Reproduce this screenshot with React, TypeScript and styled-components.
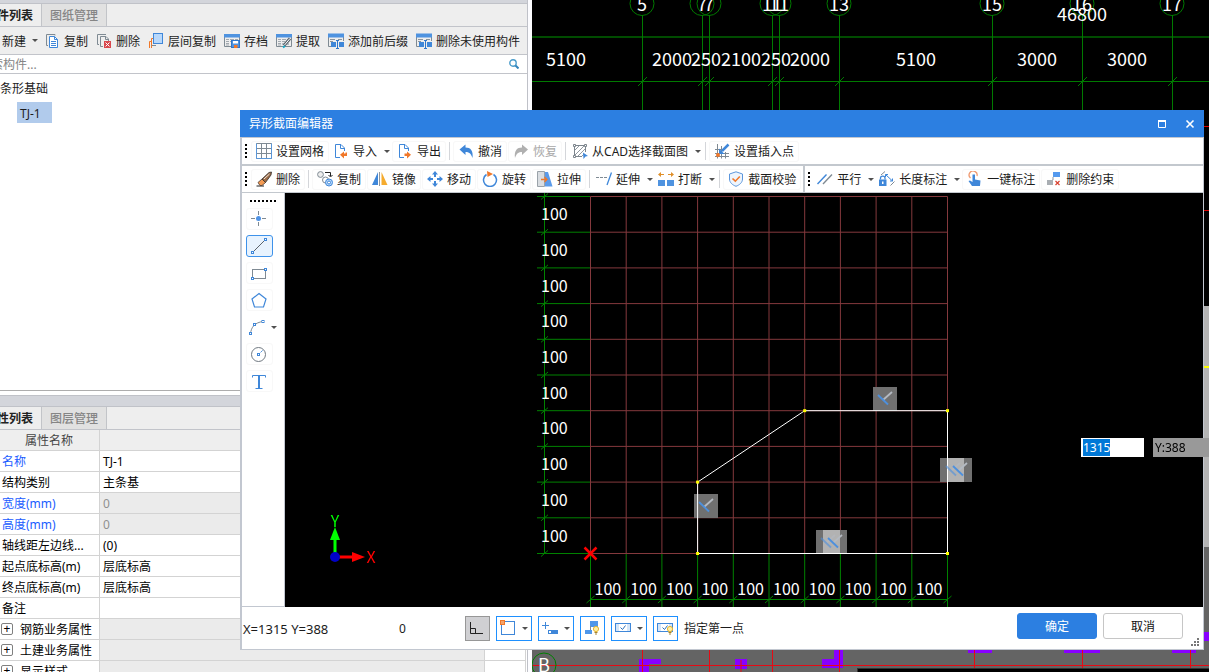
import React, { useEffect, useRef } from 'react';
import styled, { createGlobalStyle, css } from 'styled-components';

const uiFont = '"Noto Sans", "Noto Sans CJK SC", sans-serif';
const cadFont = '"Noto Sans CJK SC", sans-serif';
const blue = '#3f87d9';
const grey = '#7f8a93';
const orange = '#f0782a';

const GlobalStyle = createGlobalStyle`
  * { box-sizing: border-box; }
  body { margin: 0; background: #fcfcff; overflow: hidden; }
  button, input, table { font: inherit; color: inherit; }
`;

const Screen = styled.div`
  position: relative;
  display: flex;
  height: 100vh;
  overflow: hidden;
  font: 12px/18px ${uiFont};
  color: #1c1c1c;
`;

/* ---------- left dock ---------- */

const Dock = styled.aside`
  flex: 0 0 552px;
  margin-left: -24px;
  display: flex;
  flex-direction: column;
  border-right: 1px solid #bfc1c8;
  background: #fff;
  overflow: hidden;
`;

const DockBar = styled.div<{ $h: number }>`
  flex: 0 0 ${p => p.$h}px;
  background: #d3d5db;
  border-bottom: 1px solid #c0c2c8;
`;

const Tabs = styled.div`
  flex: 0 0 23px;
  display: flex;
  padding-left: 1px;
  background: #eeeeee;
  border-bottom: 1px solid #c2c4ca;
`;

const Tab = styled.button<{ $active?: boolean }>`
  width: 65px;
  padding: 2px 8px 0;
  border: 0;
  border-right: 1px solid #c2c4c8;
  background: ${p => (p.$active ? '#eeeeee' : '#e1e1e1')};
  color: ${p => (p.$active ? '#222' : '#858585')};
  font-weight: ${p => (p.$active ? 600 : 500)};
  white-space: nowrap;
`;

const DockTools = styled.div`
  flex: 0 0 28px;
  display: flex;
  align-items: center;
  gap: 8px;
  padding-left: 26px;
  background: #eeeeee;
  border-bottom: 1px solid #c2c4ca;
`;

const DockButton = styled.button`
  display: flex;
  align-items: center;
  gap: 4px;
  padding: 0;
  border: 0;
  background: none;
  white-space: nowrap;
`;

const NewButton = styled(DockButton)`
  gap: 6px;
  margin-right: -2px;
`;

const Caption = styled.span`
  padding-top: 2px;
`;

const SearchRow = styled.label`
  flex: 0 0 19px;
  display: flex;
  align-items: center;
  padding: 0 8px 0 3px;
  border-bottom: 1px solid #c2c4ca;
`;

const SearchInput = styled.input`
  flex: 1;
  min-width: 0;
  height: 18px;
  padding: 2px 0 0;
  border: 0;
  outline: 0;
  background: none;
  &::placeholder { color: #858585; }
`;

const Tree = styled.ul`
  flex: 0 0 317px;
  margin: 0;
  padding: 5px 0 0 24px;
  list-style: none;
  border-bottom: 1px solid #adadad;
  line-height: 20px;
`;

const TreeLeaf = styled.li`
  width: 35px;
  margin: 3px 0 0 17px;
  padding: 2px 0 0 3px;
  line-height: 19px;
  background: #b1cbec;
`;

const PropertyPanel = styled.section`
  flex: 1;
  margin-top: 4px;
  border-top: 1px solid #c0c2c8;
  display: flex;
  flex-direction: column;
  overflow: hidden;
`;

const PropertyTable = styled.table`
  width: 550px;
  table-layout: fixed;
  border-collapse: separate;
  border-spacing: 0;
  color: #000;
`;

const cell = css`
  height: 21px;
  padding: 2px 3px 0;
  border-right: 1px solid #d3d3d3;
  border-bottom: 1px solid #d3d3d3;
  font-weight: 400;
  line-height: 18px;
  text-align: left;
  white-space: nowrap;
`;

const Head = styled.th`
  ${cell}
  padding-left: 26px;
  background: #eeeeee;
  color: #444;
  text-align: center;
`;

const Name = styled.th<{ $link?: boolean }>`
  ${cell}
  padding-left: 26px;
  color: ${p => (p.$link ? '#1a5cff' : '#000')};
`;

const Value = styled.td<{ $off?: boolean }>`
  ${cell}
  background: ${p => (p.$off ? '#ebebeb' : '#fff')};
  color: ${p => (p.$off ? '#909090' : '#000')};
`;

const Expander = styled.button`
  width: 12px;
  height: 12px;
  margin: 0 7px 0 -1px;
  padding: 0;
  border: 1px solid #808080;
  border-radius: 2px;
  background: #fff;
  font-size: 12px;
  line-height: 9px;
  vertical-align: 1px;
`;

/* ---------- CAD view behind the dialog ---------- */

const CadView = styled.main`
  flex: 1;
  min-width: 0;
  margin-left: 4px;
  background: #000;
  overflow: hidden;
`;

const Drawing = styled.svg`
  display: block;
  font-family: ${cadFont};
`;

/* ---------- dialog ---------- */

const Dialog = styled.section`
  position: absolute;
  left: 240px;
  right: 5px;
  top: 110px;
  bottom: 22px;
  display: flex;
  flex-direction: column;
  background: #fff;
`;

const TitleBar = styled.header`
  flex: 0 0 27px;
  display: flex;
  align-items: center;
  gap: 14px;
  padding: 0 7px 0 9px;
  background: #2c7fe1;
  color: #fff;
`;

const Title = styled.h1`
  flex: 1;
  margin: 0;
  font-size: 12px;
  font-weight: 400;
`;

const WindowButton = styled.button`
  display: flex;
  padding: 2px;
  border: 0;
  background: none;
`;

const DialogBody = styled.div`
  flex: 1;
  min-height: 0;
  display: flex;
  flex-direction: column;
  border: 1px solid #c2c7d0;
  border-left-width: 2px;
`;

const ToolRow = styled.div<{ $line: number }>`
  flex: 0 0 ${p => 26 + p.$line}px;
  display: flex;
  border-bottom: ${p => p.$line}px solid #c3c8ce;
`;

const ToolGroup = styled.div<{ $divided?: boolean }>`
  display: flex;
  align-items: center;
  gap: 1px;
  padding: 0 2px 0 3px;
  border-right: ${p => (p.$divided ? '2px solid #c3c8ce' : '0')};
`;

const Grip = styled.span`
  width: 2px;
  height: 14px;
  margin-right: 3px;
  background: repeating-linear-gradient(#000 0 2px, transparent 2px 4px);
`;

const ToolButton = styled.button<{ $menu?: boolean }>`
  display: flex;
  align-items: center;
  height: 21px;
  padding: ${p => (p.$menu ? '0 2px 0 3px' : '0 5px')};
  border: 0;
  border-radius: 3px;
  box-shadow: ${p => (p.$menu ? 'none' : 'inset 0 0 0 1px #f8f8f8')};
  background: none;
  white-space: nowrap;
  &:disabled { color: #a8a8a8; }
`;

const ToolText = styled(Caption)`
  margin-left: 4px;
`;

const Divider = styled.span`
  width: 1px;
  height: 18px;
  margin: 0 2px;
  background: #d4d6da;
`;

const Arrow = styled.span<{ $gap?: number }>`
  width: 0;
  height: 0;
  margin-left: ${p => p.$gap ?? 0}px;
  border: 3px solid transparent;
  border-top-color: #505050;
  border-bottom-width: 0;
`;

const ToolArrow = styled(Arrow)`
  margin-right: -1px;
`;

const WorkArea = styled.div`
  flex: 1;
  min-height: 0;
  display: flex;
`;

const Palette = styled.nav`
  flex: 0 0 43px;
  display: flex;
  flex-direction: column;
  gap: 5px;
  padding: 7px 0 0 4px;
  border-right: 1px solid #c2c7d0;
  border-bottom: 1px solid #c2c7d0;
`;

const PaletteGrip = styled.span`
  width: 26px;
  height: 2px;
  margin: 0 0 1px 4px;
  background: repeating-linear-gradient(90deg, #000 0 2px, transparent 2px 4px);
`;

const PaletteItem = styled.div`
  display: flex;
  align-items: center;
`;

const PaletteButton = styled.button<{ $on?: boolean; $menu?: boolean }>`
  display: flex;
  align-items: center;
  width: ${p => (p.$menu ? 25 : 27)}px;
  height: 22px;
  padding: 0 0 0 ${p => (p.$menu ? 2 : 4)}px;
  border: 1px solid ${p => (p.$on ? '#3e92ea' : p.$menu ? 'transparent' : '#f8f8f8')};
  border-radius: 3px;
  background: ${p => (p.$on ? '#e8f3fe' : '#fff')};
`;

const SectionView = styled.div`
  flex: 1;
  min-width: 0;
  background: #000;
  overflow: hidden;
`;

const StatusBar = styled.footer`
  flex: 0 0 42px;
  display: flex;
  align-items: center;
  gap: 6px;
  padding: 0 4px 0 1px;
`;

const Coords = styled(Caption)`
  width: 150px;
  font-size: 13px;
`;

const Snap = styled(Caption)`
  width: 60px;
`;

const StatusButton = styled.button<{ $on?: boolean; $wide?: boolean }>`
  display: flex;
  align-items: center;
  justify-content: space-between;
  width: ${p => (p.$wide ? 36 : 25)}px;
  height: 25px;
  padding: 0 3px;
  border: 1px solid ${p => (p.$on ? '#979797' : '#1e90ff')};
  background: ${p => (p.$on ? '#d0d0d3' : '#fff')};
`;

const Prompt = styled(Caption)`
  flex: 1;
`;

const ActionButton = styled.button<{ $primary?: boolean }>`
  width: 80px;
  height: 26px;
  margin-bottom: 4px;
  padding: 2px 0 0;
  border: 1px solid ${p => (p.$primary ? '#2c7fe1' : '#c6c6c6')};
  border-radius: 3px;
  background: ${p => (p.$primary ? '#2c7fe1' : '#fff')};
  color: ${p => (p.$primary ? '#fff' : '#111')};
`;

const ResizeGrip = styled.svg`
  align-self: flex-end;
  margin: 0 0 3px 2px;
`;

/* ---------- floating coordinate entry ---------- */

const Entry = styled.div`
  position: absolute;
  top: 438px;
  right: 0;
  display: flex;
  gap: 9px;
`;

const XInput = styled.input`
  width: 63px;
  height: 19px;
  padding: 0 2px;
  border: 0;
  outline: 0;
  background: #fff;
  &::selection { background: #0078d7; color: #fff; }
`;

const YInput = styled.input`
  width: 56px;
  height: 19px;
  padding: 0 2px;
  border: 0;
  outline: 0;
  background: #999;
  color: #000;
`;

/* ---------- icons ---------- */

const Icon = ({ children }: { children: React.ReactNode }) => (
  <svg width="16" height="16" viewBox="0 0 16 16" fill="none" aria-hidden="true">
    {children}
  </svg>
);

const CopyDoc = () => (
  <Icon>
    <path d="M11 2.5V1.500H2.500V12.500H4" stroke={grey} />
    <path d="M5.500 3.500H10.500L13.500 6.500V14.500H5.500Z" stroke={blue} fill="#fff" />
    <path d="M10.500 3.500V6.500H13.500M7 8.500H12M7 10.500H12M7 12.500H12" stroke={blue} />
  </Icon>
);
const DeleteDoc = () => (
  <Icon>
    <path d="M10 1.500H1.500V11.500H3" stroke={grey} />
    <path d="M7 13.500H4.500V3.500H10L12.500 6V8M9.500 4V6.500H12" stroke={grey} />
    <rect x="8" y="8" width="7" height="7" fill="#d9474d" />
    <path d="M9.500 9.500L13.500 13.500M13.500 9.500L9.500 13.500" stroke="#fff" />
  </Icon>
);
const LayerCopy = () => (
  <Icon>
    <path d="M1.500 15V8.500H3M3.500 15V5.500H5" stroke={orange} />
    <path d="M3.500 12.500H8" stroke={grey} />
    <rect x="5.500" y=".5" width="9" height="10" fill="#b8d8fb" stroke={blue} />
  </Icon>
);
const Sheet = () => (
  <>
    <path d="M.5 4V13.500H7M15.500 4V7" stroke={grey} />
    <path d="M0 1H16V4.500H0Z" fill="#4f93e0" />
    <path d="M2 6.500H5M6 6.500H10M11 6.500H14M2 8.500H5M6 8.500H9M2 10.500H5M2 12H5" stroke="#a2a9b0" />
  </>
);
const SaveSheet = () => (
  <Icon>
    <Sheet />
    <rect x="7.500" y="7.500" width="8" height="7" fill="#4f93e0" stroke="#2f77cb" />
    <rect x="9" y="8" width="5" height="2.500" fill="#fff" />
    <rect x="10" y="12" width="3.500" height="3" fill={orange} />
  </Icon>
);
const ExtractSheet = () => (
  <Icon>
    <Sheet />
    <path d="M6 11H13M15.500 7V13.500H7" stroke={grey} />
    <path d="M8 12.500L14 5.500" stroke="#5c646c" strokeWidth="3" />
    <path d="M8.500 12L14 5.500" stroke="#fff" />
    <path d="M7 14.500L9 13" stroke="#16a7c6" strokeWidth="2" />
  </Icon>
);
const AffixSheet = () => (
  <Icon>
    <path d="M.5 4V13.500H3M15.500 4V8" stroke={grey} />
    <path d="M0 .5H16V4.500H0Z" fill="#4f93e0" />
    <path d="M2 6.500H7M10 6.500H14M2 8.500H5" stroke="#8b949c" />
    <path d="M3 9H8V14H3ZM11 9H16V14H11Z" fill={blue} />
    <path d="M8 7.500H11M9.500 7.500V15.500M8 15.500H11" stroke="#2f77cb" />
  </Icon>
);
const GridIcon = () => (
  <Icon>
    <path d="M.5 .5H15.500V15.500H.5ZM.5 5.500H15.500M.5 10.500H15.500M5.500 .5V15.500M10.500 .5V15.500" stroke={grey} />
    <path d="M.5 .5V15.500M.5 15.500H15.500M15.500 .5V15.500" stroke="#5a96d8" />
  </Icon>
);
const ImportIcon = () => (
  <Icon>
    <path d="M7 14.500H2.500V1.500H8L11.500 5V8M7.500 2V5.500H11" stroke={blue} />
    <path d="M14 9.500V13H11V15.500L7 11.800L11 8.500V10.500H12.500V9.500Z" fill={orange} />
  </Icon>
);
const ExportIcon = () => (
  <Icon>
    <path d="M7 14.500H2.500V1.500H8L11.500 5V8M7.500 2V5.500H11" stroke={blue} />
    <path d="M7.500 10.500H10V8.500L14 11.800L10 15.500V13H7.500Z" fill={orange} />
  </Icon>
);
const UndoIcon = () => (
  <Icon>
    <path d="M1.500 6.500L7.500 1.500V4.500C12.500 4.500 15.500 7.500 14.500 15C13 10.500 11 9 7.500 9V12Z" fill={blue} />
  </Icon>
);
const RedoIcon = () => (
  <Icon>
    <path d="M15 6.500L9 1.500V4.500C4 4.500 1 7.500 2 15C3.500 10.500 5.500 9 9 9V12Z" fill="#b0b0b0" />
  </Icon>
);
const HatchIcon = () => (
  <Icon>
    <path d="M2.500 2.500H13.500V9M2.500 2.500V13.500H10" stroke="#7c858d" />
    <path d="M3 7L7 3M3 12L12 3M6 13L13 6M10 13L12 11" stroke="#8f979f" />
    <path d="M1.500 1.500H3.500V3.500H1.500ZM12.500 1.500H14.500V3.500H12.500ZM1.500 12.500H3.500V14.500H1.500Z" fill="#fff" stroke="#7c858d" />
    <path d="M11 9.500L16 13L13.500 13.500L11.500 16Z" fill={blue} />
  </Icon>
);
const InsertPoint = () => (
  <Icon>
    <path d="M3.500 1V15.500M7.500 3V15.500M1 6.500H9M1 10.500H15M1 13.500H15M11.500 9V15.500" stroke={grey} />
    <path d="M14.500 1.500L8 8" stroke={blue} strokeWidth="2.500" />
    <path d="M5 11V5.500L10.500 11Z" fill={blue} />
    <circle cx="4" cy="12" r="2" fill={orange} />
  </Icon>
);
const EraserIcon = () => (
  <Icon>
    <path d="M.5 15H8" stroke="#222" />
    <path d="M2 11.500L6 8L9.500 11.500L6 14.500H4Z" fill="#f39a52" stroke="#4a3a30" strokeWidth=".8" />
    <path d="M6 8L13 1.500L15.500 1L15 4L9.500 11.500Z" fill="#9a6a45" stroke="#33302e" strokeWidth=".8" />
    <path d="M8 8L13.500 3" stroke="#f4e9dd" />
  </Icon>
);
const CopyShape = () => (
  <Icon>
    <circle cx="3.500" cy="3.500" r="2.900" stroke={grey} fill="#eee" />
    <path d="M8 1.500H13.500V5M11.500 4L13.500 6L15.500 4" stroke="#222" />
    <circle cx="8.500" cy="9" r="3" stroke={grey} fill="#fff" />
    <circle cx="12" cy="11.500" r="3.500" fill="#b8d8fb" stroke={blue} />
    <circle cx="12" cy="11.500" r="1.500" fill="#fff" stroke={blue} />
  </Icon>
);
const MirrorIcon = () => (
  <Icon>
    <path d="M6 1V14H0Z" fill={blue} />
    <path d="M7.500 1V15" stroke="#8f979f" />
    <path d="M9.500 1V14H15.500Z" fill="#f5ab2e" />
  </Icon>
);
const MoveIcon = () => (
  <Icon>
    <path d="M8 0L11 3.500H5ZM8 16L11 12.500H5ZM0 8L3.500 5V11ZM16 8L12.500 5V11Z" fill={blue} />
    <path d="M8 3V6M8 10V13M3 8H6M10 8H13" stroke={blue} strokeWidth="2" />
  </Icon>
);
const RotateIcon = () => (
  <Icon>
    <path d="M4.500 3.500A6.500 6.500 0 1 0 11.500 3.500" stroke={blue} strokeWidth="1.500" />
    <path d="M5 0L11 3L5.500 6Z" fill={orange} />
  </Icon>
);
const StretchIcon = () => (
  <Icon>
    <path d="M.5 .5H7.500V15.500H.5Z" fill="#d9dde1" stroke="#9aa2a9" />
    <path d="M8 1H11L15.500 15.500H8Z" fill="#5b9bea" />
    <path d="M4 8.500H10M7.500 6L10 8.500L7.500 11" stroke={orange} strokeWidth="1.300" />
  </Icon>
);
const ExtendIcon = () => (
  <Icon>
    <path d="M0 6.500H3M4 6.500H7M8 6.500H11" stroke={grey} />
    <path d="M15.500 1.500L11 14" stroke={blue} strokeWidth="1.300" />
  </Icon>
);
const BreakIcon = () => (
  <Icon>
    <path d="M0 9H7V15H0ZM9 9H16V15H9Z" fill="#4f93e0" />
    <path d="M2 3.500H6M10 3.500H14" stroke="#e0902a" />
    <path d="M0 3.500L3 1V6ZM16 3.500L13 1V6Z" fill="#e0902a" />
  </Icon>
);
const ShieldIcon = () => (
  <Icon>
    <path d="M8 .8L14.500 3V8C14.500 11.500 11.500 14 8 15.300C4.500 14 1.500 11.500 1.500 8V3Z" stroke="#5b96dc" fill="#eef5fd" />
    <path d="M4.500 7.500L7.300 10.200L11.800 5.500" stroke={orange} strokeWidth="1.600" />
  </Icon>
);
const ParallelIcon = () => (
  <Icon>
    <path d="M.5 13L9.500 3.500" stroke={blue} strokeWidth="1.400" />
    <path d="M6 13L15 3.500" stroke={grey} strokeWidth="1.400" />
  </Icon>
);
const LengthLock = () => (
  <Icon>
    <path d="M1.500 8.500V7C1.500 4.500 6 4.500 6 7V8.500" stroke={blue} strokeWidth="1.300" />
    <rect x="0" y="8.500" width="7.500" height="6.500" fill={blue} />
    <rect x="3" y="10.500" width="1.500" height="2.500" fill="#fff" />
    <path d="M2 4L6 .5M11.500 14.500L15.500 10.500" stroke={grey} />
    <path d="M6.500 3.500L13.500 10M6.500 6V3.500H9M13.500 7.500V10H11" stroke={blue} />
  </Icon>
);
const TouchIcon = () => (
  <Icon>
    <path d="M3.500 7A4 4 0 1 1 10 5" stroke="#f09b72" strokeWidth="1.300" />
    <path d="M5.500 3.500H8V8.500L13.500 9.500L13 15H5L1.500 10L3 9.500L5.500 11Z" fill={blue} />
  </Icon>
);
const DeleteConstraint = () => (
  <Icon>
    <rect x="7" y="1" width="7" height="5" fill="#559aee" />
    <path d="M7 6V9H6.500" stroke="#8f979f" />
    <rect x="1" y="9" width="6" height="5" fill="#a9aeb3" />
    <path d="M9.500 10L13.500 14M13.500 10L9.500 14" stroke="#d8412f" strokeWidth="1.200" />
  </Icon>
);
const Node = ({ x, y }: { x: number; y: number }) => (
  <rect x={x} y={y} width="2" height="2" fill="#fff" stroke={blue} />
);
const PointTool = () => (
  <Icon>
    <path d="M7.500 0V4M7.500 11V15M0 7.500H4M11 7.500H15" stroke={grey} />
    <circle cx="7.500" cy="7.500" r="2.500" fill="#4f93e6" />
  </Icon>
);
const LineTool = () => (
  <Icon>
    <path d="M2 14L14 2" stroke="#5b636b" />
    <Node x={.5} y={13.500} /><Node x={13.500} y={.5} />
  </Icon>
);
const RectTool = () => (
  <Icon>
    <rect x="1.500" y="4.500" width="13" height="9" stroke={grey} />
    <Node x={.5} y={12.500} /><Node x={13.500} y={3.500} />
  </Icon>
);
const PolygonTool = () => (
  <Icon><path d="M8 1.500L15 7L12.500 15H3.500L1 7Z" stroke={blue} strokeWidth="1.200" /></Icon>
);
const ArcTool = () => (
  <Icon>
    <path d="M1.500 15C2 8 6 3.500 14 2.500" stroke={grey} />
    <Node x={.5} y={13.500} /><Node x={4.500} y={4.500} /><Node x={13} y={1.500} />
  </Icon>
);
const CircleTool = () => (
  <Icon>
    <circle cx="7.500" cy="8.500" r="7" stroke="#707981" />
    <path d="M8 8L12 4" stroke={blue} strokeDasharray="2 1" />
    <Node x={6.500} y={7.500} />
  </Icon>
);
const TextTool = () => (
  <Icon>
    <path d="M1.500 4.500V2.500H14.500V4.500M4.500 15.500H11.500" stroke={blue} />
    <path d="M8 2.500V15.500" stroke={blue} strokeWidth="2" />
  </Icon>
);
const StatusIcon = ({ children }: { children: React.ReactNode }) => (
  <svg width="17" height="17" viewBox="0 0 17 17" fill="none" aria-hidden="true">
    {children}
  </svg>
);
const OrthoIcon = () => (
  <StatusIcon>
    <path d="M1.500 2V13.500H14M1.500 8.500H6.500V13.500" stroke="#222" />
  </StatusIcon>
);
const CornerSnap = () => (
  <StatusIcon>
    <rect x="1.500" y="1.500" width="13" height="13" stroke={blue} />
    <rect x=".5" y=".5" width="4" height="4" fill="#f5a46a" stroke={orange} />
  </StatusIcon>
);
const DynamicInput = () => (
  <StatusIcon>
    <path d="M3.500 2V9M0 5.500H7" stroke={blue} />
    <rect x="6" y="10" width="10" height="4" fill={blue} /><rect x="7" y="11" width="2" height="2" fill="#fff" />
  </StatusIcon>
);
const Bulb = ({ x, y }: { x: number; y: number }) => (
  <g transform={`translate(${x} ${y})`}>
    <circle cx="3" cy="3" r="2.600" fill="#fff0a8" stroke="#e5b52e" />
    <path d="M1.500 6.500H4.500M2 8H4" stroke="#a58330" />
  </g>
);
const ConstraintLamp = () => (
  <StatusIcon>
    <path d="M6 1H14V7H6ZM1 10H8V14H1Z" fill="#4f97ea" />
    <path d="M6.500 6V10" stroke={grey} />
    <Bulb x={9} y={6} />
  </StatusIcon>
);
const CheckBoxIcon = ({ lamp }: { lamp?: boolean }) => (
  <StatusIcon>
    <rect x=".5" y="3.500" width="15" height="8" fill="#d5e6f8" stroke={blue} />
    <rect x="4" y="4" width="8" height="7" fill="#fff" />
    <path d="M5.500 7.500L7.500 9.500L10.500 5.500" stroke="#2c6fb8" />
    {lamp && <Bulb x={10} y={6} />}
  </StatusIcon>
);

/* ---------- data ---------- */

const dockTools: [string, React.FC][] = [
  ['复制', CopyDoc], ['删除', DeleteDoc], ['层间复制', LayerCopy], ['存档', SaveSheet],
  ['提取', ExtractSheet], ['添加前后缀', AffixSheet], ['删除未使用构件', AffixSheet],
];

type Tool = { text: string; icon: React.FC; menu?: boolean; off?: boolean } | 'divider';

const fileTools: Tool[] = [
  { text: '设置网格', icon: GridIcon },
  { text: '导入', icon: ImportIcon, menu: true },
  { text: '导出', icon: ExportIcon },
  'divider',
  { text: '撤消', icon: UndoIcon },
  { text: '恢复', icon: RedoIcon, off: true },
  'divider',
  { text: '从CAD选择截面图', icon: HatchIcon, menu: true },
  'divider',
  { text: '设置插入点', icon: InsertPoint },
];

const editTools: Tool[] = [
  { text: '删除', icon: EraserIcon },
  'divider',
  { text: '复制', icon: CopyShape },
  { text: '镜像', icon: MirrorIcon },
  { text: '移动', icon: MoveIcon },
  { text: '旋转', icon: RotateIcon },
  { text: '拉伸', icon: StretchIcon },
  'divider',
  { text: '延伸', icon: ExtendIcon, menu: true },
  { text: '打断', icon: BreakIcon, menu: true },
  'divider',
  { text: '截面校验', icon: ShieldIcon },
];

const constraintTools: Tool[] = [
  { text: '平行', icon: ParallelIcon, menu: true },
  { text: '长度标注', icon: LengthLock, menu: true },
  { text: '一键标注', icon: TouchIcon },
  { text: '删除约束', icon: DeleteConstraint },
];

const drawTools: { name: string; icon: React.FC; on?: boolean; menu?: boolean }[] = [
  { name: '点', icon: PointTool },
  { name: '直线', icon: LineTool, on: true },
  { name: '矩形', icon: RectTool },
  { name: '多边形', icon: PolygonTool },
  { name: '圆弧', icon: ArcTool, menu: true },
  { name: '圆', icon: CircleTool },
  { name: '文字', icon: TextTool },
];

const properties: { name: string; value?: string; link?: boolean; off?: boolean; group?: boolean }[] = [
  { name: '名称', value: 'TJ-1', link: true },
  { name: '结构类别', value: '主条基' },
  { name: '宽度(mm)', value: '0', link: true, off: true },
  { name: '高度(mm)', value: '0', link: true, off: true },
  { name: '轴线距左边线...', value: '(0)' },
  { name: '起点底标高(m)', value: '层底标高' },
  { name: '终点底标高(m)', value: '层底标高' },
  { name: '备注' },
  { name: '钢筋业务属性', group: true, off: true },
  { name: '土建业务属性', group: true, off: true },
  { name: '显示样式', group: true, off: true },
];

const axes: [string, number][] = [
  ['5', 642], ['7', 702], ['7', 709], ['11', 772], ['11', 779], ['13', 839], ['15', 992], ['16', 1082], ['17', 1172],
];

const spans: [string, number][] = [
  ['5100', 566], ['2000', 672], ['250', 706], ['2100', 741], ['250', 776], ['2000', 810],
  ['5100', 916], ['3000', 1037], ['3000', 1127],
];

/* ---------- parts ---------- */

const Tools = ({ items }: { items: Tool[] }) => (
  <>
    <Grip />
    {items.map((t, i) =>
      t === 'divider' ? (
        <Divider key={i} />
      ) : (
        <ToolButton key={i} $menu={t.menu} disabled={t.off}>
          <t.icon />
          <ToolText>{t.text}</ToolText>
          {t.menu && <ToolArrow $gap={7} />}
        </ToolButton>
      ),
    )}
  </>
);

const PlanDrawing = () => (
  <Drawing width="677" height="672" viewBox="532 0 677 672" fontSize="18" textAnchor="middle">
    <g stroke="#007a00" fill="none">
      <path d="M532 37H1209" stroke="#004b00" strokeWidth="2" />
      <path d="M532 81.500H1209" />
      {axes.map(([, x], i) => (
        <g key={i}>
          <circle cx={x} cy="3.500" r="12" />
          <path d={`M${x + .5} 15V110M${x - 4} 86L${x + 5} 77`} />
        </g>
      ))}
    </g>
    <g fill="#fff">
      {axes.map(([label, x], i) => <text key={i} x={x} y="11">{label}</text>)}
      {spans.map(([label, x], i) => <text key={i} x={x} y="66">{label}</text>)}
      <text x="1082" y="21">46800</text>
    </g>
    <path d="M1203 126.500H1209M1203 210.500H1209" stroke="#e00000" />
    <rect x="532" y="547" width="677" height="125" fill="#646464" />
    <rect x="1204" y="306" width="5" height="241" fill="#b4b4b4" />
    <path d="M1204 366H1209V368H1204Z" fill="#ffff00" />
    <path d="M639 659H661V664H649V672H639ZM735 659H747V669H735ZM834 650H843V668H822V659H834ZM968 650H992V653H968ZM1064 650H1100V653H1064ZM1172 650H1196V653H1172ZM1203 632H1209V641H1203Z" fill="#8800ff" />
    <path d="M532 665.500H1209M642.500 650V672M709.500 650V672M741 660V672M772.500 650V672M839.500 650V672M974.500 650V672M1082.500 650V672M1190.500 650V672" stroke="#e60a14" />
    <rect x="857.500" y="668.500" width="360" height="10" fill="#000" stroke="#333" />
    <circle cx="544" cy="665" r="12" stroke="#008000" fill="none" />
    <text x="544" y="672" fill="#fff">B</text>
  </Drawing>
);

const steps = Array.from({ length: 11 }, (_, i) => i);
const gx = (i: number) => 590.5 + i * 35.7;
const gy = (i: number) => 553.5 - i * 35.7;

const Mark = ({ x, y }: { x: number; y: number }) => (
  <g transform={`translate(${x} ${y})`}>
    <path d="M10 13L19 5" stroke="#b4bac2" strokeWidth="1.800" />
    <path d="M5 8L15 17.500" stroke="#4d90de" strokeWidth="1.800" />
  </g>
);

const SectionDrawing = () => (
  <Drawing width="918" height="414" viewBox="285 193 918 414" fontSize="16" fill="none">
    <path d={steps.map(i => `M${gx(i)} ${gy(10)}V${gy(0)}M${gx(0)} ${gy(i)}H${gx(10)}`).join('')} stroke="#84393d" />
    <g stroke="#008200">
      <path d={`M544.5 193V${gy(0)}M${gx(0)} 599.5H${gx(10)}`} />
      <path d={steps.map(i => `M537 ${gy(i)}H590M${gx(i)} 554V607`).join('')} />
      <path d={steps.map(i => `M541 ${gy(i) + 3}L548 ${gy(i) - 3}M${gx(i) - 4} 603L${gx(i) + 4} 596`).join('')} />
    </g>
    <g fill="#fff">
      {steps.slice(0, 10).map(i => (
        <React.Fragment key={i}>
          <text x="541" y={gy(i) - 12}>100</text>
          <text x={gx(i) + 4} y="595">100</text>
        </React.Fragment>
      ))}
    </g>
    <g fill="#707070">
      <rect x="873" y="387" width="24" height="24" />
      <rect x="694" y="494" width="24" height="24" />
      <rect x="940" y="458" width="32" height="24" />
      <rect x="816" y="530" width="31" height="24" />
    </g>
    <g fill="#b2b2b2">
      <rect x="948" y="458" width="16" height="24" />
      <rect x="823" y="530" width="17" height="24" />
    </g>
    <path d={`M${gx(3)} ${gy(0)}V${gy(2)}L${gx(6)} ${gy(4)}H${gx(10)}V${gy(0)}Z`} stroke="#fff" />
    <Mark x={873} y={387} />
    <Mark x={694} y={494} />
    <g opacity=".6"><Mark x={941} y={458} /><Mark x={816} y={530} /></g>
    <Mark x={948} y={458} />
    <Mark x={823} y={530} />
    <g fill="#ffff00">
      {[[3, 0], [3, 2], [6, 4], [10, 4], [10, 0]].map(([i, j], k) => (
        <rect key={k} x={gx(i) - 1.5} y={gy(j) - 1.5} width="3" height="3" />
      ))}
    </g>
    <path d="M584.500 547.500L596.500 559.500M596.500 547.500L584.500 559.500" stroke="#ff0000" strokeWidth="2.500" />
    <path d="M335 557V538" stroke="#00ff00" strokeWidth="3" />
    <path d="M335 527L340 540H330Z" fill="#00ff00" />
    <path d="M335 557H354" stroke="#ff0000" strokeWidth="3" />
    <path d="M365 557L352 552V562Z" fill="#ff0000" />
    <circle cx="335" cy="557" r="5" fill="#0000c8" />
    <text x="335" y="527" fill="#00ff00" textAnchor="middle">Y</text>
    <text x="371" y="563" fill="#ff0000" textAnchor="middle">X</text>
  </Drawing>
);

export default function App() {
  const xRef = useRef<HTMLInputElement>(null);
  useEffect(() => {
    xRef.current?.focus();
    xRef.current?.select();
  }, []);

  return (
    <Screen>
      <GlobalStyle />
      <Dock>
        <DockBar $h={4} />
        <Tabs>
          <Tab $active>构件列表</Tab>
          <Tab>图纸管理</Tab>
        </Tabs>
        <DockTools>
          <NewButton><Caption>新建</Caption><Arrow /></NewButton>
          {dockTools.map(([text, Glyph]) => (
            <DockButton key={text}><Glyph /><Caption>{text}</Caption></DockButton>
          ))}
        </DockTools>
        <SearchRow>
          <SearchInput placeholder="搜索构件..." aria-label="搜索构件" />
          <svg width="10" height="10" viewBox="0 0 10 10" fill="none">
            <circle cx="4" cy="4" r="3.200" stroke="#4a9ccb" strokeWidth="1.400" />
            <path d="M6.500 6.500L9.500 9.500" stroke="#3585bb" strokeWidth="2" />
          </svg>
        </SearchRow>
        <Tree>
          <li>条形基础</li>
          <TreeLeaf>TJ-1</TreeLeaf>
        </Tree>
        <PropertyPanel>
          <DockBar $h={11} />
          <Tabs>
            <Tab $active>属性列表</Tab>
            <Tab>图层管理</Tab>
          </Tabs>
          <PropertyTable>
            <colgroup>
              <col width="124" />
              <col width="385" />
              <col />
            </colgroup>
            <thead>
              <tr><Head>属性名称</Head><Head /><Head /></tr>
            </thead>
            <tbody>
              {properties.map(p => (
                <tr key={p.name}>
                  <Name $link={p.link} scope="row">
                    {p.group && <Expander aria-label="展开">+</Expander>}
                    {p.name}
                  </Name>
                  <Value $off={p.off}>{p.value}</Value>
                  <Value />
                </tr>
              ))}
            </tbody>
          </PropertyTable>
        </PropertyPanel>
      </Dock>

      <CadView><PlanDrawing /></CadView>

      <Dialog role="dialog" aria-label="异形截面编辑器">
        <TitleBar>
          <Title>异形截面编辑器</Title>
          <WindowButton aria-label="最大化">
            <svg width="10" height="10" viewBox="0 0 10 10" fill="none" stroke="#fff">
              <path d="M1.500 2V8.500H8.500V2" /><path d="M1 2H9" strokeWidth="2" />
            </svg>
          </WindowButton>
          <WindowButton aria-label="关闭">
            <svg width="10" height="10" viewBox="0 0 10 10" fill="none" stroke="#fff" strokeWidth="1.600">
              <path d="M1.500 1.500L8.500 8.500M8.500 1.500L1.500 8.500" />
            </svg>
          </WindowButton>
        </TitleBar>
        <DialogBody>
          <ToolRow $line={2}>
            <ToolGroup><Tools items={fileTools} /></ToolGroup>
          </ToolRow>
          <ToolRow $line={1}>
            <ToolGroup $divided><Tools items={editTools} /></ToolGroup>
            <ToolGroup><Tools items={constraintTools} /></ToolGroup>
          </ToolRow>
          <WorkArea>
            <Palette>
              <PaletteGrip />
              {drawTools.map(t => (
                <PaletteItem key={t.name}>
                  <PaletteButton $on={t.on} $menu={t.menu} aria-label={t.name}><t.icon /></PaletteButton>
                  {t.menu && <Arrow />}
                </PaletteItem>
              ))}
            </Palette>
            <SectionView><SectionDrawing /></SectionView>
          </WorkArea>
          <StatusBar>
            <Coords>X=1315 Y=388</Coords>
            <Snap>0</Snap>
            <StatusButton $on aria-label="正交"><OrthoIcon /></StatusButton>
            <StatusButton $wide aria-label="对象捕捉"><CornerSnap /><Arrow /></StatusButton>
            <StatusButton $wide aria-label="动态输入"><DynamicInput /><Arrow /></StatusButton>
            <StatusButton aria-label="显示约束"><ConstraintLamp /></StatusButton>
            <StatusButton $wide aria-label="标注"><CheckBoxIcon /><Arrow /></StatusButton>
            <StatusButton aria-label="显示标注"><CheckBoxIcon lamp /></StatusButton>
            <Prompt>指定第一点</Prompt>
            <ActionButton $primary>确定</ActionButton>
            <ActionButton>取消</ActionButton>
            <ResizeGrip width="8" height="8" viewBox="0 0 8 8" fill="#777">
              <path d="M6 0H8V2H6ZM3 3H5V5H3ZM6 3H8V5H6ZM0 6H2V8H0ZM3 6H5V8H3ZM6 6H8V8H6Z" />
            </ResizeGrip>
          </StatusBar>
        </DialogBody>
      </Dialog>

      <Entry>
        <XInput ref={xRef} defaultValue="1315" aria-label="X" />
        <YInput defaultValue="Y:388" aria-label="Y" readOnly />
      </Entry>
    </Screen>
  );
}
